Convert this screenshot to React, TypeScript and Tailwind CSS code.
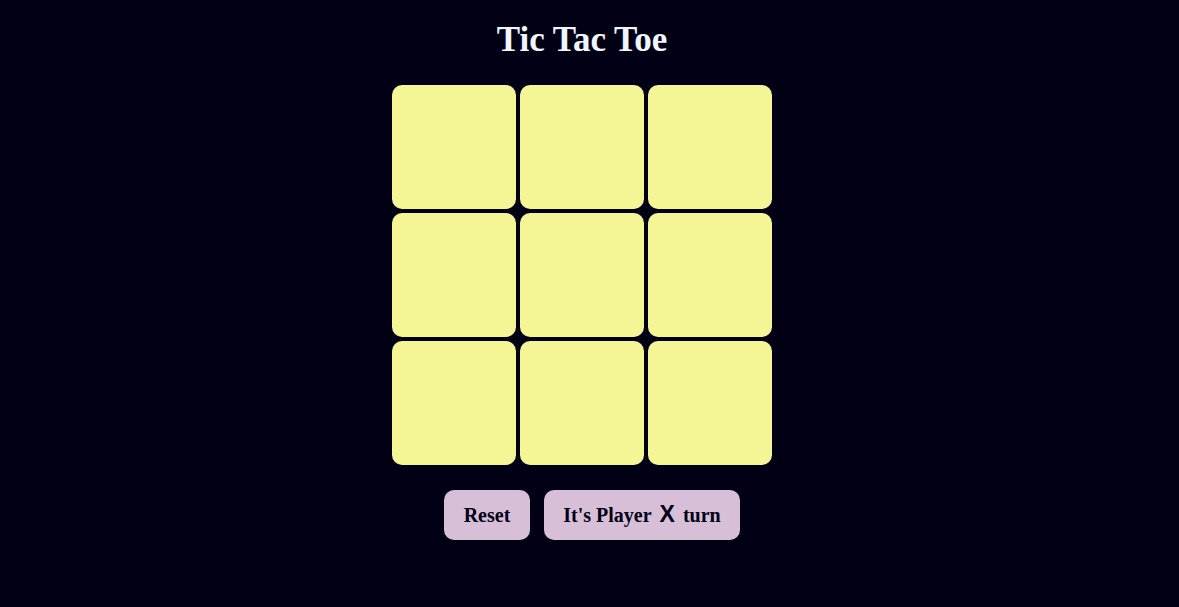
import React, { useState } from "react";

export default function App() {
    const [cells, setCells] = useState<string[]>(Array(9).fill(""));
    const [player, setPlayer] = useState("X");

    const play = (i: number) => {
        if (cells[i]) return;
        const next = [...cells];
        next[i] = player;
        setCells(next);
        setPlayer(player === "X" ? "O" : "X");
    };

    const reset = () => {
        setCells(Array(9).fill(""));
        setPlayer("X");
    };

    return (
        <div className="min-h-screen w-full bg-[#020014] flex flex-col items-center pt-[18px] pr-[15px]" style={{ fontFamily: '"Liberation Serif", serif' }}>
            <h1 className="text-[35px] leading-[43px] font-bold text-[#eef6ff]">Tic Tac Toe</h1>

            {/* Board */}
            <div className="mt-[24px] grid grid-cols-[repeat(3,124px)] grid-rows-[repeat(3,124px)] gap-[4px]">
                {cells.map((c, i) => (
                    <button
                        key={i}
                        onClick={() => play(i)}
                        className="rounded-[10px] bg-[#f4f696] text-[64px] font-bold text-[#020014]"
                        style={{ fontFamily: '"Liberation Sans", sans-serif' }}
                    >
                        {c}
                    </button>
                ))}
            </div>

            {/* Controls */}
            <div className="mt-[25px] flex items-center gap-[14px] pl-[20px]">
                <button
                    onClick={reset}
                    className="h-[50px] w-[86px] rounded-[10px] bg-[#d8bfd8] text-[20px] font-bold text-[#020014]"
                >
                    Reset
                </button>
                <button className="h-[50px] w-[196px] rounded-[10px] bg-[#d8bfd8] text-[20px] font-bold text-[#020014] flex items-baseline justify-center gap-[8px] pt-[10px]">
                    <span>It's Player</span>
                    <span className="text-[23px] leading-none" style={{ fontFamily: '"Liberation Sans", sans-serif' }}>{player}</span>
                    <span>turn</span>
                </button>
            </div>
        </div>
    );
}
